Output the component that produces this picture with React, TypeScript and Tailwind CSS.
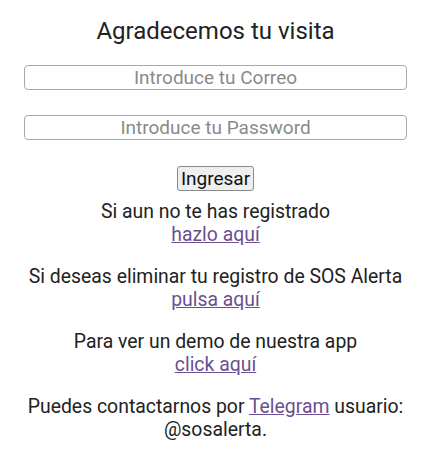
export default function App() {
  return (
    <div className="min-h-[455px] bg-white text-center text-[#222] font-['Roboto','Liberation_Sans',sans-serif]">
      {/* Título */}
      <h1 className="pt-[17px] text-[24px] leading-[28px] font-normal">Agradecemos tu visita</h1>

      {/* Formulario */}
      <form className="mt-[20px] flex flex-col items-center px-[24px]">
        <input
          className="h-[25px] w-full rounded-[4px] border-[1.5px] border-[#a8a8a8] text-center text-[19px] leading-[22px] placeholder:text-[#8a8a8a] outline-none"
          placeholder="Introduce tu Correo"
        />
        <input
          type="password"
          className="mt-[25px] h-[25px] w-full rounded-[4px] border-[1.5px] border-[#a8a8a8] text-center text-[19px] leading-[22px] placeholder:text-[#8a8a8a] outline-none"
          placeholder="Introduce tu Password"
        />
        <button
          type="button"
          className="mt-[26px] h-[25px] w-[77px] rounded-[3px] border border-[#8a8a8a] bg-[#efefef] text-[19px] leading-[22px] text-[#111]"
        >
          Ingresar
        </button>
      </form>

      {/* Enlaces */}
      <div className="mt-[10px] flex flex-col gap-[20px] text-[19.4px] leading-[22.5px]">
        <p>
          Si aun no te has registrado
          <br />
          <a href="#" className="text-[#6b4f8f] underline">hazlo aquí</a>
        </p>
        <p>
          Si deseas eliminar tu registro de SOS Alerta
          <br />
          <a href="#" className="text-[#6b4f8f] underline">pulsa aquí</a>
        </p>
        <p>
          Para ver un demo de nuestra app
          <br />
          <a href="#" className="text-[#6b4f8f] underline">click aquí</a>
        </p>
        <p className="px-[16px]">
          Puedes contactarnos por{" "}
          <a href="#" className="text-[#6b4f8f] underline">Telegram</a> usuario: @sosalerta.
        </p>
      </div>
    </div>
  );
}
